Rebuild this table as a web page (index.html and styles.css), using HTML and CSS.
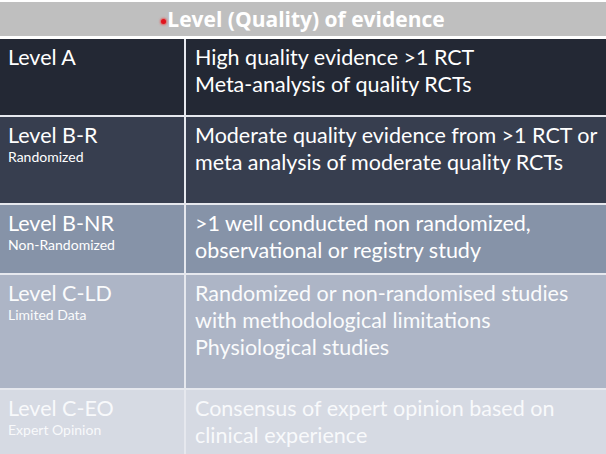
FILE: index.html
```html
<!DOCTYPE html>
<html>
<head>
<meta charset="utf-8">
<link rel="stylesheet" href="styles.css">
</head>
<body>
<div class="slide">
  <div class="header"><span class="title"><span class="pointer"></span>Level (Quality) of evidence</span></div>
  <div class="table">
    <div class="row row-a">
      <div class="cell left"><div class="level">Level A</div></div>
      <div class="cell right">High quality evidence &gt;1 RCT<br>Meta-analysis of quality RCTs</div>
    </div>
    <div class="row row-br">
      <div class="cell left"><div class="level">Level B-R</div><div class="sub">Randomized</div></div>
      <div class="cell right">Moderate quality evidence from &gt;1 RCT or<br>meta analysis of moderate quality RCTs</div>
    </div>
    <div class="row row-bnr">
      <div class="cell left"><div class="level">Level B-NR</div><div class="sub">Non-Randomized</div></div>
      <div class="cell right">&gt;1 well conducted non randomized,<br>observational or registry study</div>
    </div>
    <div class="row row-cld">
      <div class="cell left"><div class="level">Level C-LD</div><div class="sub">Limited Data</div></div>
      <div class="cell right">Randomized or non-randomised studies<br>with methodological limitations<br>Physiological studies</div>
    </div>
    <div class="row row-ceo">
      <div class="cell left"><div class="level">Level C-EO</div><div class="sub">Expert Opinion</div></div>
      <div class="cell right">Consensus of expert opinion based on<br>clinical experience</div>
    </div>
  </div>
</div>
</body>
</html>
```
FILE: styles.css
```css
html, body {
  margin: 0;
  padding: 0;
  background: #ffffff;
  overflow: hidden;
}
.slide {
  width: 606px;
  height: 454px;
  font-family: "Lato", "Open Sans", sans-serif;
  color: #ffffff;
  padding-top: 2px;
  box-sizing: border-box;
  overflow: hidden;
}
.header {
  height: 34px;
  background: #bfbfbf;
  display: flex;
  align-items: center;
  justify-content: center;
}
.title {
  position: relative;
  font-family: "Open Sans", "Lato", sans-serif;
  font-weight: 700;
  font-size: 21px;
  line-height: 1;
  margin-top: 1px;
  margin-left: 6px;
}
.pointer {
  position: absolute;
  left: -6px;
  top: 10px;
  width: 5px;
  height: 5px;
  border-radius: 50%;
  background: #e0141e;
  box-shadow: 0 0 2px 1px rgba(240, 60, 60, 0.7);
}
.table {
  margin-top: 3px;
  display: grid;
  grid-template-rows: 76px 86px 68px 113px 64px;
  row-gap: 2px;
  background: #e6e8ee;
}
.row {
  display: grid;
  grid-template-columns: 184px 420px;
  column-gap: 2px;
}
.cell {
  padding: 5px 6px 0 9px;
  font-size: 21.5px;
  line-height: 27px;
}
.left {
  padding-left: 8px;
}
.sub {
  font-size: 14px;
  line-height: 18px;
  margin-top: -1px;
}
.row-a .cell { background: #232834; }
.row-br .cell { background: #373e4f; }
.row-bnr .cell { background: #8693a8; }
.row-cld .cell { background: #adb5c6; color: #fafbfc; }
.row-ceo .cell { background: #d6dae3; color: #f8f9fb; }
```
